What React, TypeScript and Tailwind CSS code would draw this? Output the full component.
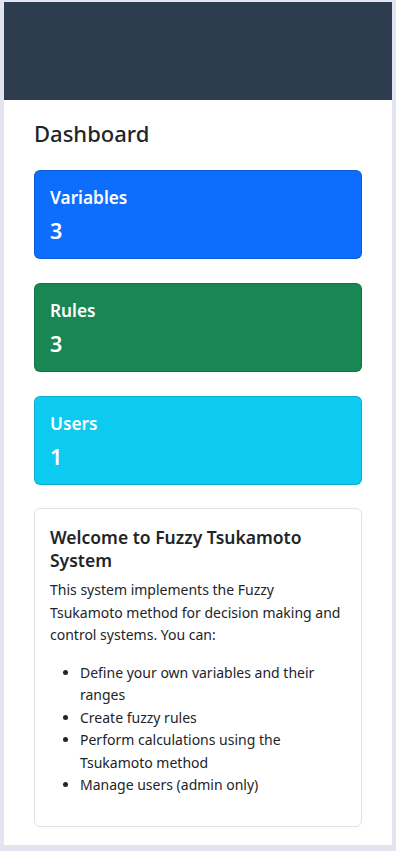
import React from "react";

const font = { fontFamily: '"Noto Sans", "Open Sans", sans-serif' };

function StatCard({ title, value, color, className }: { title: string; value: string; color: string; className?: string }) {
  return (
    <div className={`h-[89px] rounded-[6px] border border-black/15 px-[15px] pt-[16px] text-white ${color} ${className ?? ""}`}>
      <div className="text-[17.25px] font-semibold leading-[22.5px]">{title}</div>
      <div className="mt-[7.5px] text-[21.5px] font-semibold leading-[27px]">{value}</div>
    </div>
  );
}

export default function App() {
  return (
    <div className="min-h-[851px] bg-[#e2e5ef] pl-[4px] pr-[4px] pt-[2px] pb-[8px] text-[14px] leading-[22.5px] text-[#212529]" style={font}>
      <div className="h-[98px] bg-[#2d3c4f]" />
      <div className="bg-white px-[30px] pt-[18px] pb-[18px]">
        <h2 className="mb-[22px] text-[22px] font-medium leading-[30px]">Dashboard</h2>
        <StatCard title="Variables" value="3" color="bg-[#0d6efd]" />
        <StatCard title="Rules" value="3" color="bg-[#198754]" className="mt-[24px]" />
        <StatCard title="Users" value="1" color="bg-[#0dcaf0]" className="mt-[24px]" />
        <div className="mt-[23px] rounded-[6px] border border-[#dee2e6] px-[15px] pt-[17px] pb-[14px]">
          <h5 className="mb-[7px] text-[17.5px] font-semibold leading-[23px]">
            Welcome to Fuzzy Tsukamoto System
          </h5>
          <p className="mb-[15px]">
            This system implements the Fuzzy Tsukamoto method for decision making and control systems. You can:
          </p>
          <ul className="mb-[15px] list-disc pl-[30px]">
            <li>Define your own variables and their ranges</li>
            <li>Create fuzzy rules</li>
            <li>Perform calculations using the Tsukamoto method</li>
            <li>Manage users (admin only)</li>
          </ul>
        </div>
      </div>
    </div>
  );
}
